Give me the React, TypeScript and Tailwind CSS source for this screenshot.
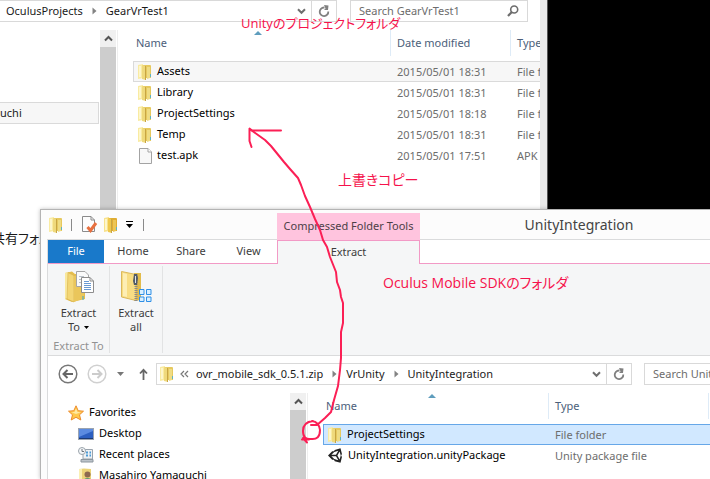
import React from "react";

const ui = "font-['Noto_Sans','Noto_Sans_CJK_JP',sans-serif]";
const note =
  "absolute whitespace-nowrap font-['Open_Sans','Noto_Sans_CJK_JP',sans-serif] text-[#f5124b] [font-feature-settings:'palt']";

function FolderIcon({ deep = false }: { deep?: boolean }) {
  return (
    <svg width="14" height="16" viewBox="0 0 14 16" className="shrink-0" aria-hidden="true">
      <path d="M5 1 H12 Q13 1 13 2 V14 H5 Z" fill={deep ? "#e0ad33" : "#e6c95f"} />
      <path d="M0 1 L5 0 V14 L0 15 Z" fill={deep ? "#f8e28c" : "#f9eba2"} />
      <path d="M1 2 H3 V13 H1 Z" fill="#fdf6cc" />
      <path d="M4 1 L8 2 V16 L4 15 Z" fill={deep ? "#efc84e" : "#efd97c"} />
      <path d="M7 2 H8 V16 H7 Z" fill="#c7a544" />
      <path d="M9 3 H12 V14 L9 15 Z" fill={deep ? "#edc655" : "#efdc84"} />
      <path d="M12 10 H13 V13 H12 Z" fill="#62b2bd" />
    </svg>
  );
}

function PageIcon() {
  return (
    <svg width="14" height="16" viewBox="0 0 14 16" className="shrink-0" aria-hidden="true">
      <path d="M1.500 0.500 H10 L13.500 4 V15.500 H1.500 Z" fill="#f8f8f8" stroke="#a3a3a3" />
      <path d="M10 0.500 V4 H13.500" fill="#fff" stroke="#a3a3a3" />
    </svg>
  );
}

function CheckPageIcon() {
  return (
    <svg width="16" height="17" viewBox="0 0 16 17" className="shrink-0" aria-hidden="true">
      <path d="M0.500 0.500 H9 L12.500 4 V15.500 H0.500 Z" fill="#fdfdfd" stroke="#8b8b8b" />
      <path d="M9 0.500 V4 H12.500" fill="none" stroke="#8b8b8b" />
      <path d="M5.500 11 L8.500 14.500 L14 7" fill="none" stroke="#e8703f" strokeWidth="3" />
    </svg>
  );
}

function UnityIcon() {
  return (
    <svg width="15" height="15" viewBox="0 0 24 24" className="shrink-0" aria-hidden="true">
      <path
        fill="#222"
        d="M22.300 9.600 L20 0.500 L10.800 3 L9.500 5.300 L6.700 5.300 L0 12 L6.700 18.700 L9.500 18.700 L10.800 21 L20 23.500 L22.300 14.400 L21 12 Z M10 6.500 L16.500 4.500 L12.800 10.800 H5.400 Z M10 17.500 L5.400 13.200 H12.800 L16.500 19.500 Z M18.600 18.300 L15 12 L18.600 5.700 L20.400 12 Z"
        fillRule="evenodd"
      />
    </svg>
  );
}

function ExtractToIcon() {
  return (
    <svg width="32" height="32" viewBox="0 0 32 32" aria-hidden="true">
      <path d="M2 2 L9 0.500 L12 3 H22 V28 L9 31 L2 28 Z" fill="#e5bd4c" />
      <path d="M2 2 L5 1 V27 L2 28 Z" fill="#f9e89d" />
      <path d="M5 1.500 L11 4.500 V31 L4 28 Z" fill="#f3d675" stroke="#d7b04a" strokeWidth="0.600" />
      <path d="M11 5 H21 V27 L11 31 Z" fill="#eac65b" />
      <path d="M20 25 V29" stroke="#3ba7c9" />
      <path d="M13.500 0.500 H22 L25.500 4 V15.500 H13.500 Z" fill="#fafafa" stroke="#a5a5a5" />
      <path d="M16 5.500 H21 M16 8.500 H21 M16 11.500 H21" stroke="#b9c0c8" />
      <path d="M18.500 6.500 H27 L30.500 10 V21.500 H18.500 Z" fill="#fff" stroke="#8d8d8d" />
      <path d="M27 6.500 V10 H30.500" fill="none" stroke="#8d8d8d" />
      <path d="M21 10.500 H26 M21 12.500 H28 M21 14.500 H28 M21 16.500 H28 M21 18.500 H28" stroke="#6899d3" />
    </svg>
  );
}

function ExtractAllIcon() {
  return (
    <svg width="32" height="32" viewBox="0 0 32 32" aria-hidden="true">
      <path d="M14 2 H21 V29 L14 30 Z" fill="#e2bb4a" />
      <path d="M1.500 0.500 L16 3.500 V29.500 L1.500 26 Z" fill="#f8dd83" stroke="#dbb85b" />
      <path d="M3 2 L7 3 V26 L3 25 Z" fill="#fdeeb4" />
      <path d="M16 3 V30" stroke="#8c8c8c" strokeWidth="3" strokeDasharray="1 1" />
      <path d="M14 3 H17 L18 7 L17 14 H14 L13 10 Z" fill="#525a66" />
      <path d="M15.500 5 V12" stroke="#dbe2ea" />
      <path
        d="M19.500 18.500 H24 V23.500 H19.500 Z M26.500 18.500 H31 V23.500 H26.500 Z M19.500 26 H24 V30.500 H19.500 Z M26.500 26 H31 V30.500 H26.500 Z"
        fill="#d9efff"
        stroke="#2f8fe6"
      />
    </svg>
  );
}

function StarIcon() {
  return (
    <svg width="16" height="16" viewBox="0 0 16 16" className="shrink-0" aria-hidden="true">
      <path d="M8 0.800 L10.200 5.700 L15.500 6.200 L11.500 9.800 L12.800 15 L8 12.300 L3.200 15 L4.500 9.800 L0.500 6.200 L5.800 5.700 Z" fill="#ffc84c" stroke="#ec8c2c" />
      <path d="M8 3.500 L9.500 7 L13 7.200 L8 9 L3.500 7.200 L6.500 7 Z" fill="#ffe9a3" />
    </svg>
  );
}

function DesktopIcon() {
  return (
    <svg width="16" height="14" viewBox="0 0 16 14" className="shrink-0" aria-hidden="true">
      <rect x="0.500" y="1.500" width="15" height="11" fill="#2c5fc0" stroke="#9aa3b0" />
      <path d="M1 2 H15 V4 L1 10 Z" fill="#5b8be0" />
      <path d="M1 11.500 H15" stroke="#1c3a73" />
    </svg>
  );
}

function RecentIcon() {
  return (
    <svg width="16" height="16" viewBox="0 0 16 16" className="shrink-0" aria-hidden="true">
      <path d="M5 2.500 H14.500 V12 H5 Z" fill="#eef1f4" stroke="#9ba4ad" />
      <path d="M8 5.500 H10 M11.500 5.500 H13 M8 8.500 H10 M11.500 8.500 H13" stroke="#4c9bd6" strokeWidth="2" />
      <path d="M3 12.500 H15 V15 H3 Z" fill="#bcc3ca" stroke="#8d969e" />
      <circle cx="4" cy="4" r="3.500" fill="#f5f7f9" stroke="#9aa3ab" />
      <path d="M4 2 V4.500 H6" fill="none" stroke="#6d757d" />
    </svg>
  );
}

function UserFolderIcon() {
  return (
    <svg width="16" height="16" viewBox="0 0 16 16" className="shrink-0" aria-hidden="true">
      <path d="M1 1 L6 0.500 L13 1 V14 L6 16 L1 14 Z" fill="#ecd378" />
      <path d="M1 1 L4 1 V14 L1 14 Z" fill="#fbf0b4" />
      <circle cx="9.500" cy="6.500" r="3" fill="#8d6a50" />
      <path d="M5 15 Q5 10 9.500 10 Q14 10 14.500 15 Z" fill="#5b9e72" />
    </svg>
  );
}

function RefreshIcon() {
  return (
    <svg width="12" height="13" viewBox="0 0 12 13" aria-hidden="true">
      <path d="M6.500 2.500 H6 A4.300 4.300 0 1 0 10.300 6.500" fill="none" stroke="#808080" strokeWidth="1.800" />
      <path d="M6 0 L10.500 0.500 L10 5 L6 5 L7.500 3.500 Z" fill="#808080" />
    </svg>
  );
}

function ChevronDown() {
  return (
    <svg width="9" height="7" viewBox="0 0 9 7" aria-hidden="true">
      <path d="M1 1.200 L4.500 4.800 L8 1.200" fill="none" stroke="#6f6f6f" strokeWidth="2" />
    </svg>
  );
}

function CrumbArrow() {
  return (
    <svg width="5" height="8" viewBox="0 0 5 8" className="shrink-0" aria-hidden="true">
      <path d="M0.500 0.500 L4.500 4 L0.500 7.500 Z" fill="#838383" />
    </svg>
  );
}

function DownTriangle({ className }: { className: string }) {
  return (
    <svg width="7" height="4" viewBox="0 0 7 4" className={className} aria-hidden="true">
      <path d="M0 0 H7 L3.500 4 Z" fill="currentColor" />
    </svg>
  );
}

function ScrollBar() {
  return (
    <div className="flex w-4 shrink-0 flex-col bg-[#cdcdcd]">
      <button aria-label="Scroll up" className="flex h-[17px] items-center justify-center bg-[#f0f0f0]">
        <svg width="9" height="7" viewBox="0 0 9 7" aria-hidden="true">
          <path d="M1 5.500 L4.500 2 L8 5.500" fill="none" stroke="#555" strokeWidth="2" />
        </svg>
      </button>
    </div>
  );
}

function HeaderCell({ label, sorted = false, first = false }: { label: string; sorted?: boolean; first?: boolean }) {
  return (
    <th className="relative h-[31px] p-0 text-left align-top font-normal">
      {sorted && (
        <svg width="8" height="4" viewBox="0 0 8 4" className="absolute left-1/2 top-px -ml-2" aria-hidden="true">
          <path d="M4 0 L8 4 H0 Z" fill="#5f9dbd" />
        </svg>
      )}
      <span
        className={
          first
            ? "block h-[26px] pl-[3px] leading-[26px] text-[#4c607a]"
            : "block h-[26px] overflow-hidden whitespace-nowrap border-l border-[#deebf7] pl-[6px] leading-[26px] text-[#4c607a]"
        }
      >
        {label}
      </span>
    </th>
  );
}

type FileRow = { icon: React.ReactNode; name: string; cells: string[]; state?: "hover" | "selected" };

function FileTable({ heads, rows, cols }: { heads: string[]; rows: FileRow[]; cols: React.ReactNode }) {
  return (
    <table className="w-full table-fixed border-separate border-spacing-0">
      {cols}
      <thead>
        <tr>
          {heads.map((h, i) => (
            <HeaderCell key={h} label={h} sorted={i === 0} first={i === 0} />
          ))}
        </tr>
      </thead>
      <tbody>
        {rows.map((r) => {
          const tone =
            r.state === "hover"
              ? "border-[#dadada] bg-[#f7f7f7]"
              : r.state === "selected"
                ? "border-[#66a7e8] bg-[#d1e8ff]"
                : "border-transparent";
          return (
            <tr key={r.name}>
              <td className={`h-[21px] border-y border-l p-0 ${tone}`}>
                <span className="flex h-[19px] items-center gap-[5px] whitespace-nowrap pl-1 text-black">
                  {r.icon}
                  {r.name}
                </span>
              </td>
              {r.cells.map((c, i) => (
                <td
                  key={i}
                  className={`h-[21px] overflow-hidden whitespace-nowrap border-y p-0 pl-[7px] leading-[19px] text-[#6d6d6d] ${tone}`}
                >
                  {c}
                </td>
              ))}
            </tr>
          );
        })}
      </tbody>
    </table>
  );
}

function ProjectWindow() {
  return (
    <section className="absolute left-0 top-0 flex h-full w-[548px] flex-col border-r border-[#555] bg-[#e9e9e9] pr-[7px]">
      <div className="flex h-[22px] shrink-0 gap-[13px] bg-white pr-3">
        <div className="flex flex-1 items-center border-y border-r border-[#d9d9d9]">
          <button className="ml-[6px]">OculusProjects</button>
          <span className="mx-[9px]"><CrumbArrow /></span>
          <button>GearVrTest1</button>
          <button aria-label="Previous locations" className="ml-auto flex h-full w-5 items-center justify-center border-r border-[#d9d9d9]">
            <ChevronDown />
          </button>
          <button aria-label="Refresh" className="flex h-full w-6 items-center justify-center">
            <RefreshIcon />
          </button>
        </div>
        <label className="flex w-[178px] items-center border border-[#d9d9d9] pl-2 pr-2">
          <input aria-label="Search GearVrTest1" placeholder="Search GearVrTest1" className="w-0 flex-1 outline-none placeholder:text-[#6d6d6d]" />
          <svg width="12" height="12" viewBox="0 0 12 12" aria-hidden="true">
            <circle cx="7.200" cy="4.500" r="3.500" fill="none" stroke="#6d6d6d" strokeWidth="1.600" />
            <path d="M4.800 7 L1 11" stroke="#6d6d6d" strokeWidth="2.200" />
          </svg>
        </label>
      </div>
      <div className="flex flex-1 bg-white pt-2">
        <nav className="w-[100px] shrink-0 overflow-hidden pr-px pt-[72px]">
          <div className="flex h-[22px] items-center border-y border-r border-[#dadada] bg-[#f7f7f7]">uchi</div>
          <div className="-ml-2 mt-[103px] whitespace-nowrap text-[13px] leading-[22px] [font-feature-settings:'palt']">共有フォルダ</div>
        </nav>
        <ScrollBar />
        <div className="ml-px flex-1 border-l border-[#eee] pl-[15px]">
          <FileTable
            heads={["Name", "Date modified", "Type"]}
            cols={
              <colgroup>
                <col />
                <col className="w-[120px]" />
                <col className="w-[30px]" />
              </colgroup>
            }
            rows={[
              { icon: <FolderIcon />, name: "Assets", cells: ["2015/05/01 18:31", "File folder"], state: "hover" },
              { icon: <FolderIcon />, name: "Library", cells: ["2015/05/01 18:31", "File folder"] },
              { icon: <FolderIcon />, name: "ProjectSettings", cells: ["2015/05/01 18:18", "File folder"] },
              { icon: <FolderIcon />, name: "Temp", cells: ["2015/05/01 18:31", "File folder"] },
              { icon: <PageIcon />, name: "test.apk", cells: ["2015/05/01 17:51", "APK File"] },
            ]}
          />
        </div>
      </div>
    </section>
  );
}

function Ribbon() {
  return (
    <>
      <div className="flex h-[24px] shrink-0 text-[#3c3c3c]">
        <button className="w-[56px] border-b border-[#f29ac6] bg-[#1979ca] text-white">File</button>
        <button className="w-[58px] border-b border-[#f29ac6]">Home</button>
        <button className="w-[58px] border-b border-[#f29ac6]">Share</button>
        <button className="w-[57px] border-b border-[#f29ac6]">View</button>
        <button className="w-[143px] border-x border-t border-[#f29ac6] bg-[#f5f6f7]">Extract</button>
        <div className="flex-1 border-b border-[#f29ac6]" />
      </div>
      <div className="flex h-[92px] shrink-0 border-b border-[#dadbdc] bg-[#f5f6f7] py-[2px] leading-[14px] text-[#3c3c3c]">
        <div className="flex w-[62px] flex-col items-center border-r border-[#e2e3e4] pt-[5px]">
          <button className="flex flex-col items-center">
            <ExtractToIcon />
            <span className="mt-[3px]">Extract</span>
            <span className="flex items-center gap-1">
              To <DownTriangle className="h-[3px] w-[5px] text-black" />
            </span>
          </button>
          <span className="mt-[5px] whitespace-nowrap text-[#929292]">Extract To</span>
        </div>
        <div className="flex w-[53px] flex-col items-center border-r border-[#e2e3e4] pt-[5px]">
          <button className="flex flex-col items-center">
            <ExtractAllIcon />
            <span className="mt-[3px]">Extract</span>
            <span>all</span>
          </button>
        </div>
      </div>
    </>
  );
}

function AddressRow() {
  return (
    <div className="mt-[7px] flex h-[22px] shrink-0 items-center">
      <button aria-label="Back" className="ml-[10px]">
        <svg width="20" height="20" viewBox="0 0 20 20" aria-hidden="true">
          <circle cx="10" cy="10" r="8.800" fill="none" stroke="#777" strokeWidth="1.500" />
          <path d="M15 10 H6 M9.500 6 L5.500 10 L9.500 14" fill="none" stroke="#666" strokeWidth="2" />
        </svg>
      </button>
      <button aria-label="Forward" className="ml-[9px]">
        <svg width="20" height="20" viewBox="0 0 20 20" aria-hidden="true">
          <circle cx="10" cy="10" r="8.800" fill="none" stroke="#d0d0d0" strokeWidth="1.500" />
          <path d="M5 10 H14 M10.500 6 L14.500 10 L10.500 14" fill="none" stroke="#ccc" strokeWidth="2" />
        </svg>
      </button>
      <button aria-label="Recent locations" className="ml-[10px]">
        <DownTriangle className="text-[#777]" />
      </button>
      <button aria-label="Up" className="ml-[15px]">
        <svg width="9" height="12" viewBox="0 0 9 12" aria-hidden="true">
          <path d="M4.500 12 V1.500 M1 5.500 L4.500 1.800 L8 5.500" fill="none" stroke="#666" strokeWidth="1.800" />
        </svg>
      </button>
      <div className="ml-2 flex h-[22px] flex-1 items-center whitespace-nowrap border border-[#d9d9d9] pl-[3px]">
        <FolderIcon />
        <svg width="9" height="8" viewBox="0 0 9 8" className="ml-[6px] mr-[7px] shrink-0" aria-hidden="true">
          <path d="M4 1 L1 4 L4 7 M8 1 L5 4 L8 7" fill="none" stroke="#777" strokeWidth="1.200" />
        </svg>
        <button>ovr_mobile_sdk_0.5.1.zip</button>
        <span className="mx-[9px]"><CrumbArrow /></span>
        <button>VrUnity</button>
        <span className="mx-[9px]"><CrumbArrow /></span>
        <button>UnityIntegration</button>
        <button aria-label="Previous locations" className="ml-auto flex h-full w-5 items-center justify-center border-r border-[#d9d9d9]">
          <ChevronDown />
        </button>
        <button aria-label="Refresh" className="flex h-full w-6 items-center justify-center">
          <RefreshIcon />
        </button>
      </div>
      <label className="ml-3 flex h-[22px] w-[66px] items-center border-y border-l border-[#d9d9d9] pl-2">
        <input aria-label="Search UnityIntegration" placeholder="Search UnityIntegration" className="w-0 flex-1 outline-none placeholder:text-[#6d6d6d]" />
      </label>
    </div>
  );
}

function SdkWindow() {
  return (
    <section className="absolute bottom-0 left-10 right-0 top-[209px] flex flex-col overflow-hidden border-l border-t border-[#b4b4b4] bg-[#fcfcfc] pl-[6px] shadow-[0_0_4px_rgba(0,0,0,0.25)]">
      <header className="flex h-[29px] shrink-0 items-center pl-[2px]">
        <FolderIcon />
        <span className="ml-2 h-3 w-px bg-[#8a8a8a]" />
        <button aria-label="Properties" className="ml-[10px]"><CheckPageIcon /></button>
        <button aria-label="New folder" className="ml-[6px]"><FolderIcon deep /></button>
        <button aria-label="Customize" className="ml-2 flex flex-col items-center gap-[2px] text-black">
          <span className="h-px w-[7px] bg-black" />
          <DownTriangle className="" />
        </button>
        <span className="ml-[10px] h-3 w-px bg-[#8a8a8a]" />
      </header>
      <div className="flex flex-1 flex-col border-l border-t border-[#dadbdc] bg-white">
        <Ribbon />
        <AddressRow />
        <div className="mt-2 flex flex-1">
          <nav className="w-[242px] shrink-0 overflow-hidden pt-[9px] text-black">
            <div className="flex h-[21px] items-center gap-[5px] pl-5"><StarIcon />Favorites</div>
            <div className="flex h-[21px] items-center gap-[5px] pl-[30px]"><DesktopIcon />Desktop</div>
            <div className="flex h-[21px] items-center gap-[5px] pl-[30px]"><RecentIcon />Recent places</div>
            <div className="flex h-[21px] items-center gap-[5px] pl-[30px]"><UserFolderIcon />Masahiro Yamaguchi</div>
          </nav>
          <ScrollBar />
          <div className="ml-px flex-1 border-l border-[#eee] pl-[15px]">
            <FileTable
              heads={["Name", "Type", ""]}
              cols={
                <colgroup>
                  <col />
                  <col className="w-[160px]" />
                  <col className="w-[2px]" />
                </colgroup>
              }
              rows={[
                { icon: <FolderIcon />, name: "ProjectSettings", cells: ["File folder", ""], state: "selected" },
                { icon: <UnityIcon />, name: "UnityIntegration.unityPackage", cells: ["Unity package file", ""] },
              ]}
            />
          </div>
        </div>
      </div>
      <div className="absolute left-[236px] top-[3px] flex h-[27px] w-[143px] items-center justify-center whitespace-nowrap bg-[#ffc4de] text-[#4d3f47]">
        Compressed Folder Tools
      </div>
      <h1 className="absolute left-[379px] right-[-28px] top-0 text-center text-[14px] leading-[30px] text-[#444]">UnityIntegration</h1>
    </section>
  );
}

export default function App() {
  return (
    <main className={`relative h-screen w-full overflow-hidden bg-black text-[11px] text-[#1a1a1a] ${ui}`}>
      <ProjectWindow />
      <SdkWindow />
      <svg className="pointer-events-none absolute left-0 top-0" width="710" height="479" viewBox="0 0 710 479" fill="none" stroke="#fb1f55" strokeWidth="2" strokeLinejoin="round" strokeLinecap="round" aria-hidden="true">
        <path d="M281 130.500 H252 L249.500 128.500 L249.500 141 L251.500 147" />
        <path d="M251 130 L258 135 L265 140 L271 146 L284 162 L290 169 L298 178 L301 185 L305 196 L310 207 L315 219 L320 230 L323 240 L327 247 L330 257 L334 267 L336 272 L337 282 L340 290 L341 297 L343 303 V323 L341 332 V358 L340 370 L338 386 L334 400 L331 412 L325 418 L317 425 H311" />
        <path d="M313 421 Q303 422 303 431 Q303 440 311 439 Q320 440 320 430 Q319 422 312 421 M302 439.500 H309 M303 438 L307 442.500" />
      </svg>
      <p className={`${note} left-[241px] top-[13px] text-[13px] leading-[20px]`}>Unityのプロジェクトフォルダ</p>
      <p className={`${note} left-[338px] top-[170px] text-[14px] leading-[20px]`}>上書きコピー</p>
      <p className={`${note} left-[383px] top-[273px] text-[14px] leading-[20px]`}>Oculus Mobile SDKのフォルダ</p>
    </main>
  );
}
